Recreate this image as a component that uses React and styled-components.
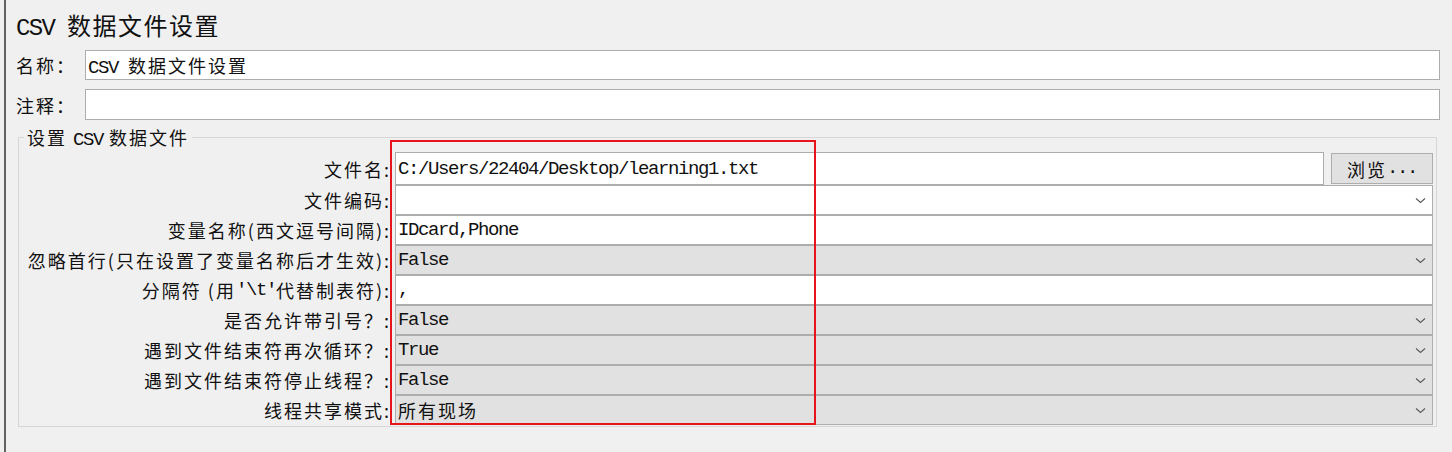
import React from 'react'
import styled, { createGlobalStyle } from 'styled-components'

const GlobalStyle = createGlobalStyle`
    html, body {
        margin: 0;
        padding: 0;
        background: #f0f0f0;
    }
    body {
        font-family: "Noto Sans CJK SC", "Liberation Sans", sans-serif;
        color: #111;
    }
`

const cjk = `"Noto Sans CJK SC", "Noto Sans", sans-serif`
const mono = `"Liberation Mono", "DejaVu Sans Mono", monospace`

const Page = styled.div`
    position: relative;
    width: 1452px;
    height: 452px;
    padding-left: 4px;
    box-sizing: border-box;
    overflow: hidden;
`

const Panel = styled.div`
    height: 100%;
    border-left: 2px solid #626262;
    padding: 6px 12px 0 10px;
    box-sizing: border-box;
    display: flex;
    flex-direction: column;
`

const Title = styled.div`
    font-family: ${cjk};
    font-size: 24px;
    letter-spacing: 1.5px;
    line-height: 38px;
    height: 38px;
    white-space: nowrap;
`

// half-width latin run: mono glyphs squeezed onto the half-em pitch of the CJK text
// pitch = 0.6 * size + spacing
const Latin = styled.span`
    font-family: ${mono};
    font-size: ${props => props.$size || 19}px;
    letter-spacing: ${props => props.$spacing ?? -1.4}px;
    line-height: 1;
`

const TopRow = styled.div`
    display: flex;
    align-items: center;
    margin-top: ${props => props.$gap}px;
    height: ${props => props.$height}px;
`

const TopLabel = styled.div`
    width: 69px;
    flex: none;
    font-family: ${cjk};
    font-size: 18px;
    letter-spacing: 2px;
    white-space: nowrap;
`

const Field = styled.div`
    flex: 1;
    height: 100%;
    box-sizing: border-box;
    border: 1px solid #adadad;
    background: ${props => props.$gray ? '#e1e1e1' : '#fff'};
    display: flex;
    align-items: center;
    padding: 0 6px 0 2px;
    min-width: 0;
`

const FieldText = styled.span`
    flex: 1;
    white-space: nowrap;
    font-family: ${props => props.$mono ? mono : cjk};
    font-size: ${props => props.$mono ? '19px' : '18px'};
    letter-spacing: ${props => props.$mono ? '-1.4px' : '2px'};
    color: #111;
`

const Group = styled.fieldset`
    margin: 6px 3px 0 2px;
    padding: 4px 3px 1px 0;
    border: 1px solid #d6d6d6;
    min-width: 0;
`

const Legend = styled.legend`
    margin-left: 5px;
    padding: 0 3px;
    height: 22px;
    font-family: ${cjk};
    font-size: 18px;
    letter-spacing: 2px;
    line-height: 22px;
    white-space: nowrap;
`

const Grid = styled.div`
    display: grid;
    grid-template-columns: 372px 1fr;
    column-gap: 4px;
`

const Label = styled.div`
    height: ${props => props.$height || 30}px;
    display: flex;
    align-items: center;
    justify-content: flex-end;
    font-family: ${cjk};
    font-size: 18px;
    letter-spacing: 2px;
    white-space: nowrap;
`

const Line = styled.div`
    height: ${props => props.$height || 30}px;
    display: flex;
    align-items: center;
    gap: 7px;
`

const Button = styled.div`
    width: 102px;
    height: 31px;
    flex: none;
    box-sizing: border-box;
    border: 1px solid #adadad;
    background: #e1e1e1;
    display: flex;
    align-items: center;
    justify-content: center;
    font-family: ${cjk};
    font-size: 18px;
    letter-spacing: 2px;
`

const Chevron = () => (
    <svg width="11" height="7" viewBox="0 0 11 7" style={{ flex: 'none' }}>
        <path d="M1 1.5 L5.5 5.5 L10 1.5" fill="none" stroke="#5a5a5a" strokeWidth="1.1" />
    </svg>
)

const Annotation = styled.div`
    position: absolute;
    left: 390px;
    top: 140px;
    width: 426px;
    height: 285px;
    box-sizing: border-box;
    border: 2px solid #e8141c;
    pointer-events: none;
`

const rows = [
    { label: '文件编码:', value: '', combo: true },
    { label: '变量名称(西文逗号间隔):', value: 'IDcard,Phone' },
    { label: '忽略首行(只在设置了变量名称后才生效):', value: 'False', combo: true, gray: true },
    { label: <>分隔符 (用<Latin>'\t'</Latin>代替制表符):</>, value: ',' },
    { label: '是否允许带引号？:', value: 'False', combo: true, gray: true },
    { label: '遇到文件结束符再次循环？:', value: 'True', combo: true, gray: true },
    { label: '遇到文件结束符停止线程？:', value: 'False', combo: true, gray: true },
    { label: '线程共享模式:', value: '所有现场', combo: true, gray: true, cjkValue: true },
]

export default function App() {
    return (
        <Page>
            <GlobalStyle />
            <Panel>
                <Title><Latin $size={24} $spacing={-1.65}>CSV </Latin>数据文件设置</Title>
                <TopRow $gap={6} $height={30}>
                    <TopLabel>名称：</TopLabel>
                    <Field>
                        <FieldText><Latin>CSV </Latin>数据文件设置</FieldText>
                    </Field>
                </TopRow>
                <TopRow $gap={9} $height={31}>
                    <TopLabel>注释：</TopLabel>
                    <Field />
                </TopRow>
                <Group>
                    <Legend>设置 <Latin>CSV</Latin> 数据文件</Legend>
                    <Grid>
                        <Label $height={33}>文件名:</Label>
                        <Line $height={33}>
                            <Field>
                                <FieldText $mono>C:/Users/22404/Desktop/learning1.txt</FieldText>
                            </Field>
                            <Button>浏览<Latin>...</Latin></Button>
                        </Line>
                        {rows.map((row, i) => (
                            <React.Fragment key={`row-${i}`}>
                                <Label>{row.label}</Label>
                                <Line>
                                    <Field $gray={row.gray}>
                                        <FieldText $mono={!row.cjkValue}>{row.value}</FieldText>
                                        {row.combo && <Chevron />}
                                    </Field>
                                </Line>
                            </React.Fragment>
                        ))}
                    </Grid>
                </Group>
            </Panel>
            <Annotation />
        </Page>
    )
}
